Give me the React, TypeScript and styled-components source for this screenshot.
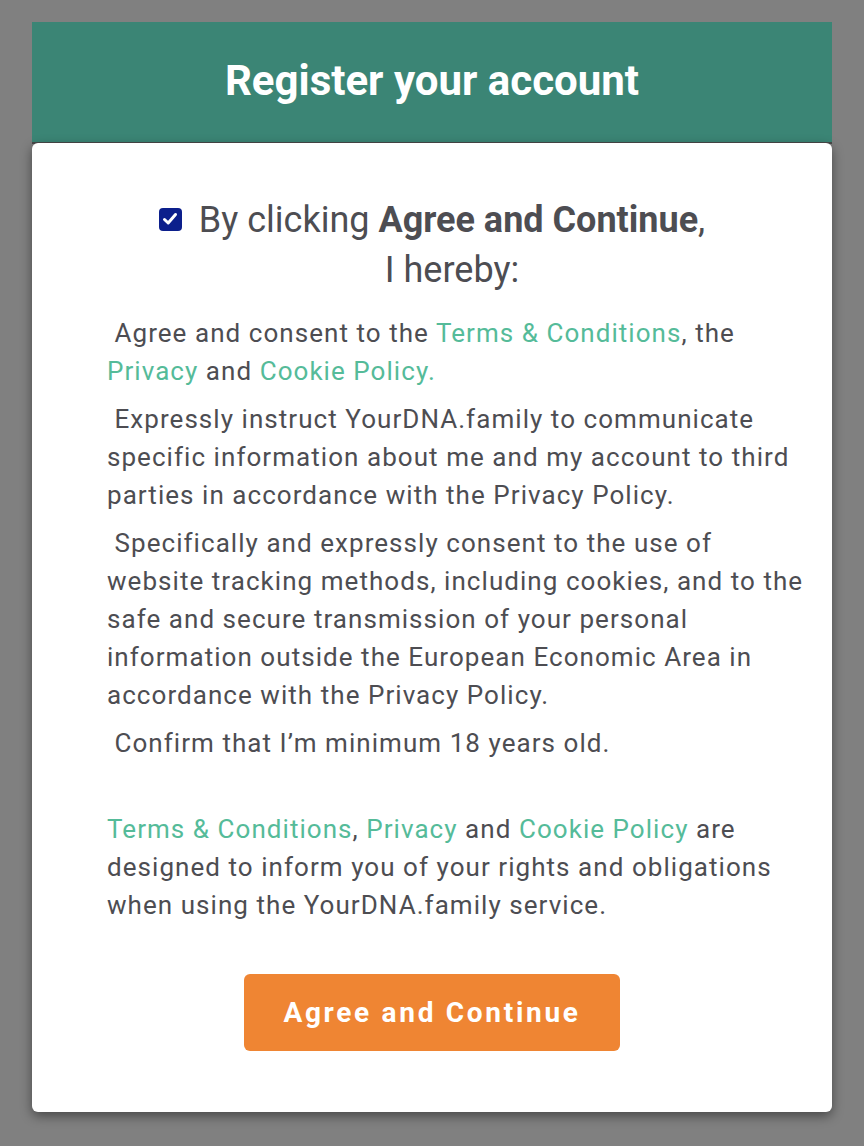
import React from 'react';
import styled, { createGlobalStyle } from 'styled-components';

const GlobalStyle = createGlobalStyle`
  html, body {
    margin: 0;
    padding: 0;
    background: #808080;
    font-family: Roboto, "Liberation Sans", sans-serif;
  }
`;

const Page = styled.div`
  width: 800px;
  margin: 0 auto;
  padding: 22px 0 35px;
`;

const Header = styled.div`
  height: 120px;
  background: #3b8575;
  display: flex;
  align-items: center;
  justify-content: center;
  border-bottom: 2px solid #4a4a4a;
`;

const Title = styled.h1`
  margin: 0;
  color: #ffffff;
  font-size: 42px;
  font-weight: 700;
  padding-bottom: 4px;
`;

const Card = styled.div`
  background: #ffffff;
  border-radius: 6px;
  margin-top: -1px;
  box-shadow: 0 4px 12px rgba(0, 0, 0, 0.45);
  padding: 52px 27px 61px 75px;
  color: #4d4d52;
`;

const Heading = styled.div`
  text-align: center;
  font-size: 36px;
  line-height: 50px;
  margin-bottom: 19px;
  margin-left: -48px;

  b {
    font-weight: 700;
  }
`;

const SecondLine = styled.span`
  display: block;
  padding-left: 40px;
`;

const Check = styled.span`
  display: inline-flex;
  align-items: center;
  justify-content: center;
  width: 23px;
  height: 23px;
  border-radius: 4px;
  background: #0c1f8c;
  margin-right: 17px;
  vertical-align: 4px;
`;

const Para = styled.p<{ $gap?: number }>`
  margin: ${(p) => p.$gap ?? 0}px 0 10px;
  font-size: 26px;
  letter-spacing: 1.05px;
  line-height: 38px;
`;

const Link = styled.a`
  color: #55bb99;
  text-decoration: none;
`;

const Actions = styled.div`
  display: flex;
  justify-content: center;
  margin-top: 50px;
  margin-left: -48px;
`;

const Button = styled.button`
  width: 376px;
  height: 77px;
  border: none;
  border-radius: 6px;
  background: #ef8533;
  color: #ffffff;
  font-family: Roboto, "Liberation Sans", sans-serif;
  font-size: 28px;
  font-weight: 700;
  letter-spacing: 2.7px;
  cursor: pointer;
`;

export default function App() {
  return (
    <>
      <GlobalStyle />
      <Page>
        <Header>
          <Title>Register your account</Title>
        </Header>
        <Card>
          <Heading>
            <Check>
              <svg width="18" height="18" viewBox="0 0 18 18">
                <path d="M3.5 9.5 L7.2 13 L14.5 4.5" fill="none" stroke="#fff" strokeWidth="3" strokeLinecap="round" strokeLinejoin="round" />
              </svg>
            </Check>
            By clicking <b>Agree and Continue</b>,
            <SecondLine>I hereby:</SecondLine>
          </Heading>
          <Para>
            &nbsp;Agree and consent to the <Link href="#">Terms &amp; Conditions</Link>, the{' '}
            <Link href="#">Privacy</Link> and <Link href="#">Cookie Policy.</Link>
          </Para>
          <Para>
            &nbsp;Expressly instruct YourDNA.family to communicate specific information about me and my account to third
            parties in accordance with the Privacy Policy.
          </Para>
          <Para>
            &nbsp;Specifically and expressly consent to the use of website tracking methods, including cookies, and to the
            safe and secure transmission of your personal information outside the European Economic Area in accordance
            with the Privacy Policy.
          </Para>
          <Para>&nbsp;Confirm that I’m minimum 18 years old.</Para>
          <Para $gap={48}>
            <Link href="#">Terms &amp; Conditions</Link>, <Link href="#">Privacy</Link> and{' '}
            <Link href="#">Cookie Policy</Link> are designed to inform you of your rights and obligations when using the
            YourDNA.family service.
          </Para>
          <Actions>
            <Button>Agree and Continue</Button>
          </Actions>
        </Card>
      </Page>
    </>
  );
}
